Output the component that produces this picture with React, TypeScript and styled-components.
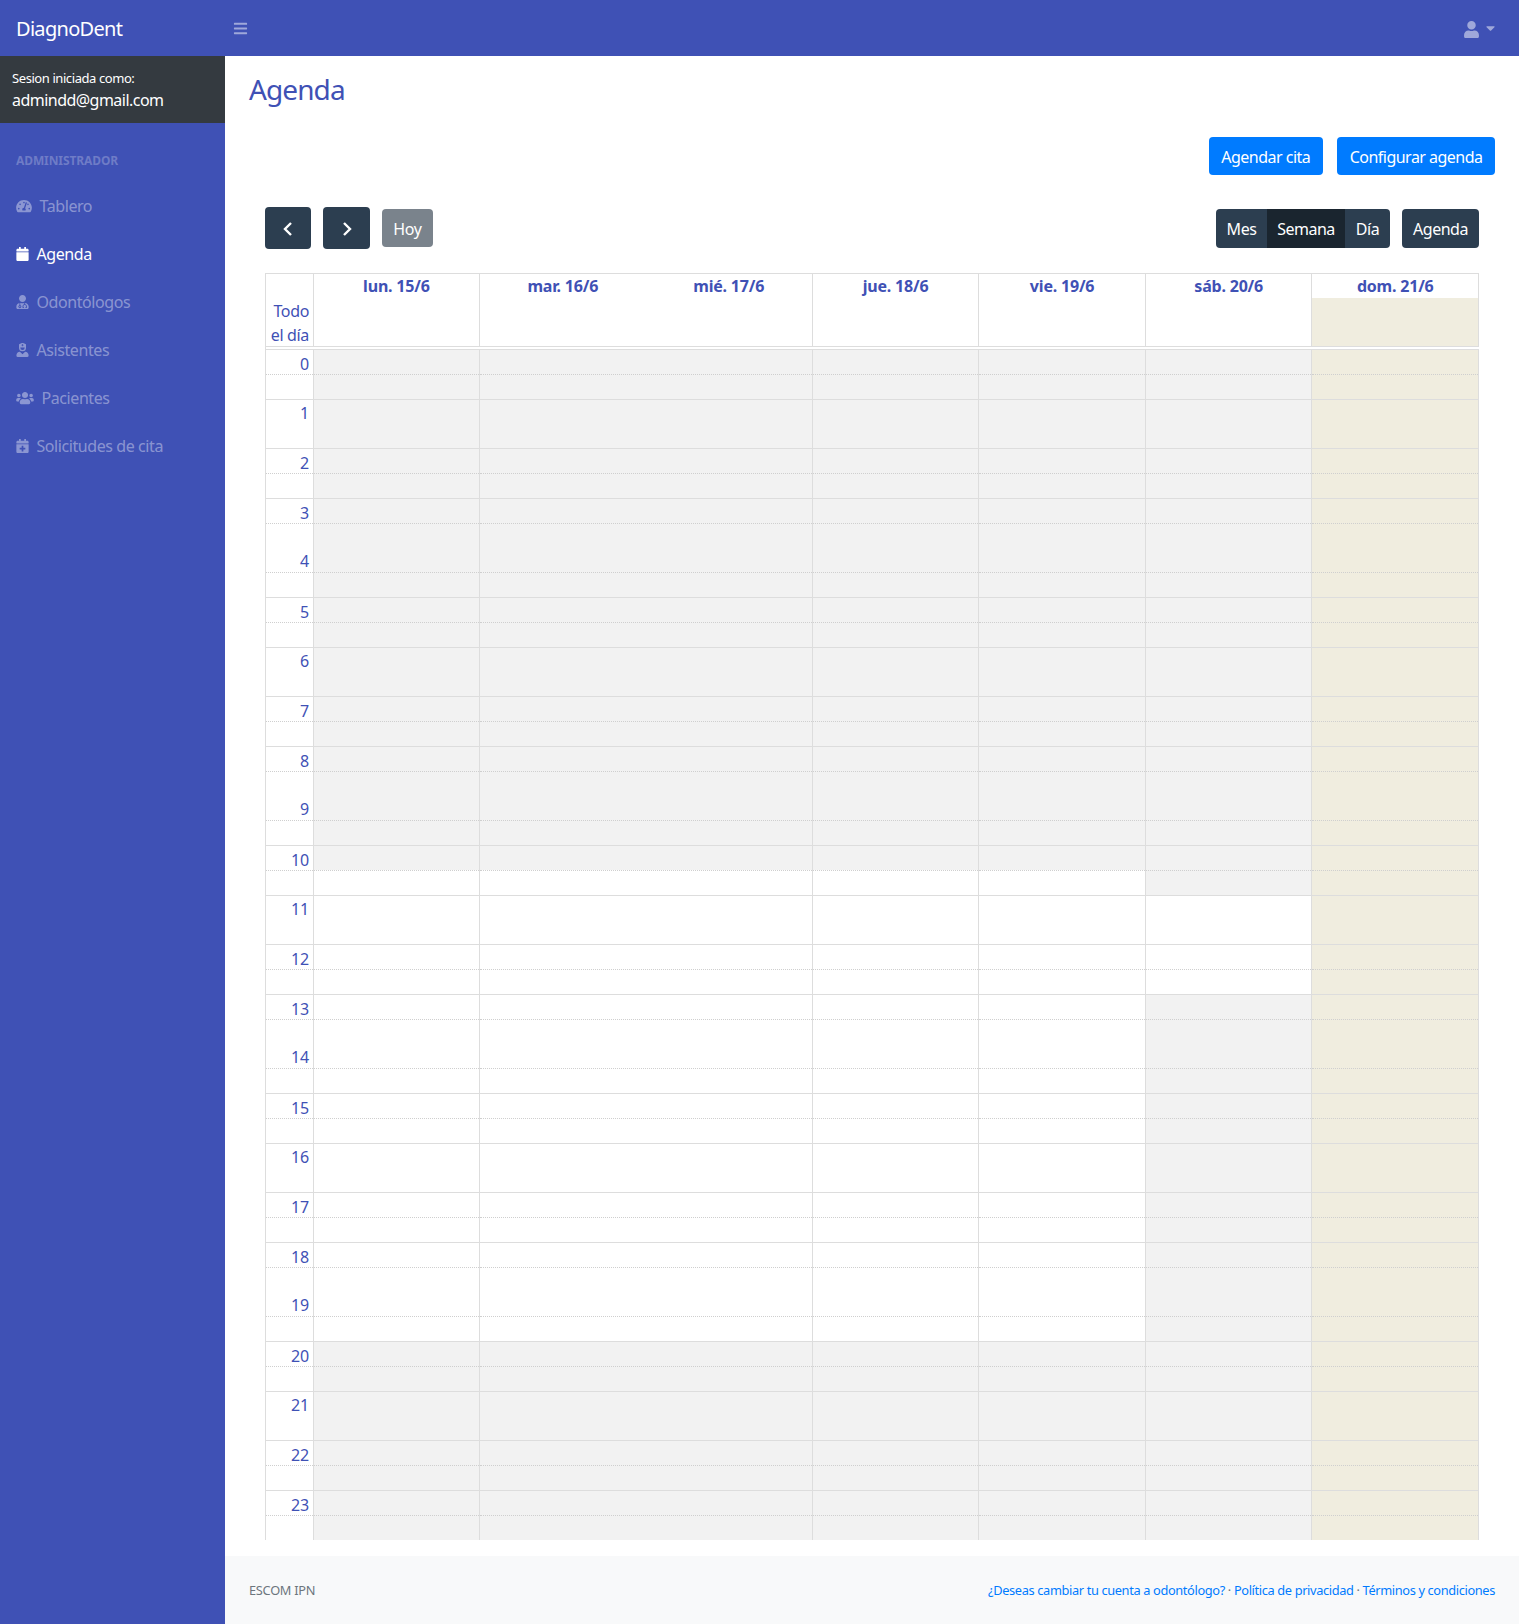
import React from "react";
import styled, { createGlobalStyle } from "styled-components";
import {
  FaBars,
  FaCalendar,
  FaCalendarPlus,
  FaCaretDown,
  FaTachometerAlt,
  FaUser,
  FaUserMd,
  FaUserNurse,
  FaUsers,
} from "react-icons/fa";

const Global = createGlobalStyle`
  html, body { margin: 0; padding: 0; background: #fff; }
  body {
    font-family: "Noto Sans", "Open Sans", "Liberation Sans", sans-serif;
    font-size: 16px;
    line-height: 24px;
    letter-spacing: -0.35px;
    color: #212529;
  }
  * { box-sizing: border-box; }
`;

const Page = styled.div`
  width: 1519px;
  height: 1624px;
  display: flex;
  flex-direction: column;
  overflow: hidden;
`;

const Topbar = styled.header`
  height: 56px;
  flex: none;
  background: #3f51b5;
  display: flex;
  align-items: center;
`;

const Brand = styled.div`
  width: 225px;
  padding: 2px 0 0 16px;
  font-size: 20px;
  color: #fff;
  letter-spacing: -0.7px;
`;

const MenuToggle = styled.div`
  margin: 1px 0 0 8px;
  display: flex;
  color: #9fa8da;
  font-size: 15px;
`;

const UserMenu = styled.div`
  margin-left: auto;
  margin-right: 24px;
  display: flex;
  align-items: center;
  gap: 6px;
  color: #9fa8da;
  font-size: 17px;
`;

const UserIcon = styled(FaUser)`
  margin-top: 2px;
`;

const Caret = styled(FaCaretDown)`
  width: 9px;
  height: 14px;
`;

const Body = styled.div`
  flex: 1;
  display: flex;
  min-height: 0;
`;

const Sidebar = styled.aside`
  width: 225px;
  flex: none;
  background: #3f51b5;
`;

const SessionBox = styled.div`
  height: 67px;
  background: #343a40;
  padding: 11px 12px 0;
  color: #fff;
`;

const SessionLabel = styled.div`
  font-size: 13px;
  line-height: 22px;
  letter-spacing: -0.42px;
`;

const SessionMail = styled.div`
  margin-top: -1px;
  font-size: 16px;
  line-height: 24px;
  letter-spacing: -0.53px;
`;

const SectionHeading = styled.div`
  margin-top: 28px;
  padding-left: 16px;
  height: 20px;
  font-size: 12px;
  line-height: 20px;
  font-weight: 700;
  letter-spacing: -0.1px;
  color: rgba(255, 255, 255, 0.25);
`;

const Nav = styled.nav`
  margin-top: 11px;
  display: flex;
  flex-direction: column;
`;

const NavItem = styled.a<{ $active?: boolean }>`
  height: 48px;
  padding-left: 16px;
  display: flex;
  align-items: center;
  gap: 7.5px;
  color: ${(p) => (p.$active ? "#fff" : "rgba(255, 255, 255, 0.4)")};
  font-size: 16px;
  letter-spacing: -0.42px;
`;

const NavGlyph = styled.span<{ $w: number }>`
  display: flex;
  svg {
    width: ${(p) => p.$w}px;
    height: 14px;
  }
`;

const Content = styled.div`
  flex: 1;
  min-width: 0;
  display: flex;
  flex-direction: column;
`;

const Main = styled.main`
  padding: 16px 24px 0;
`;

const Title = styled.h1`
  margin: 0;
  font-size: 28px;
  line-height: 34px;
  font-weight: 400;
  letter-spacing: -0.9px;
  color: #3f51b5;
`;

const Actions = styled.div`
  margin-top: 31px;
  display: flex;
  justify-content: flex-end;
  gap: 14.5px;
`;

const PrimaryButton = styled.a`
  height: 38px;
  padding: 2px 12.5px 0;
  display: flex;
  align-items: center;
  background: #007bff;
  color: #fff;
  border-radius: 4px;
  letter-spacing: -0.52px;
`;

const CalendarWrap = styled.section`
  padding: 0 16px;
`;

const Toolbar = styled.div`
  margin-top: 32px;
  height: 42px;
  display: flex;
  align-items: center;
  justify-content: space-between;
`;

const ToolGroup = styled.div`
  display: flex;
  align-items: center;
  gap: 12px;
`;

const ArrowButton = styled.a<{ $w: number }>`
  width: ${(p) => p.$w}px;
  height: 42px;
  padding-top: 2px;
  display: flex;
  align-items: center;
  justify-content: center;
  background: #2c3e50;
  border-radius: 4px;
`;

const TodayButton = styled.a`
  width: 51px;
  height: 38px;
  padding-top: 2px;
  display: flex;
  align-items: center;
  justify-content: center;
  background: #7a838c;
  color: #fff;
  border-radius: 4px;
`;

const ViewGroup = styled.div`
  display: flex;
  border-radius: 4px;
  overflow: hidden;
`;

const ViewButton = styled.a<{ $active?: boolean; $w: number }>`
  width: ${(p) => p.$w}px;
  height: 39px;
  padding-top: 2px;
  display: flex;
  align-items: center;
  justify-content: center;
  background: ${(p) => (p.$active ? "#1a252f" : "#2c3e50")};
  color: #fff;
  letter-spacing: -0.48px;
`;

const ViewSingle = styled(ViewButton)`
  border-radius: 4px;
`;

const Calendar = styled.div`
  margin-top: 24px;
  border-left: 1px solid #ddd;
  color: #3f51b5;
`;

const HeaderRow = styled.div`
  height: 74px;
  display: flex;
  border-top: 1px solid #ddd;
  border-bottom: 1px solid #ddd;
`;

const AllDayLabel = styled.div`
  width: 48px;
  flex: none;
  padding: 25px 4px 0 0;
  border-right: 1px solid #ddd;
  text-align: right;
`;

const DayHead = styled.div<{ $span: number }>`
  flex: ${(p) => p.$span} 1 0;
  min-width: 0;
  border-right: 1px solid #ddd;
  display: flex;
`;

const DayHeadCell = styled.div`
  flex: 1 1 0;
  display: flex;
  flex-direction: column;
  min-width: 0;
`;

const DayName = styled.div`
  height: 24px;
  flex: none;
  text-align: center;
  font-weight: 700;
  letter-spacing: -0.2px;
  background: #fff;
`;

const AllDayArea = styled.div<{ $today?: boolean }>`
  flex: 1;
  background: ${(p) => (p.$today ? "#f0eddf" : "#fff")};
`;

const TimeGrid = styled.div`
  margin-top: 2px;
  display: flex;
`;

const GutterColumn = styled.div`
  width: 48px;
  flex: none;
  border-right: 1px solid #ddd;
`;

const DayColumn = styled.div<{ $span: number }>`
  flex: ${(p) => p.$span} 1 0;
  min-width: 0;
  border-right: 1px solid #ddd;
`;

type Line = "solid" | "dotted" | "none";

const Slot = styled.div<{ $h: number; $line: Line; $tone?: string }>`
  height: ${(p) => p.$h}px;
  background: ${(p) => p.$tone ?? "transparent"};
  border-top: ${(p) =>
    p.$line === "none" ? "0" : p.$line === "solid" ? "1px solid #ddd" : "1px dotted #cfcfcf"};
`;

const HourLabel = styled.div<{ $top: number }>`
  padding: ${(p) => p.$top}px 4px 0 0;
  text-align: right;
  white-space: nowrap;
  letter-spacing: -0.2px;
`;

const Footer = styled.footer`
  margin-top: auto;
  height: 68px;
  flex: none;
  padding: 0 24px;
  background: #f8f9fa;
  display: flex;
  align-items: center;
  justify-content: space-between;
  font-size: 12.8px;
  letter-spacing: -0.28px;
  color: #6c757d;
`;

const FooterLinks = styled.span`
  letter-spacing: -0.36px;
`;

const FooterLink = styled.a`
  color: #007bff;
`;

const Chevron = styled.svg`
  display: block;
`;

const PERIOD_HEIGHTS = [25, 25, 24, 25, 25, 25, 25, 24, 25, 25];
const PERIOD_LINES: Line[] = [
  "solid",
  "dotted",
  "solid",
  "none",
  "solid",
  "dotted",
  "solid",
  "dotted",
  "none",
  "dotted",
];

const GRAY = "#f2f2f2";
const BEIGE = "#f0eddf";

const SLOTS = Array.from({ length: 48 }, (_, i) => ({
  i,
  h: PERIOD_HEIGHTS[i % 10] + (i === 47 ? 1 : 0),
  line: PERIOD_LINES[i % 10],
  labelTop: i % 10 === 2 ? 1 : 2,
}));

const weekdayTone = (i: number) => (i <= 20 || i >= 40 ? GRAY : undefined);
const saturdayTone = (i: number) => (i <= 21 || i >= 26 ? GRAY : undefined);
const sundayTone = () => BEIGE;

const DAYS = [
  { labels: ["lun. 15/6"], span: 0.995, tone: weekdayTone },
  { labels: ["mar. 16/6", "mié. 17/6"], span: 2.005, tone: weekdayTone },
  { labels: ["jue. 18/6"], span: 1, tone: weekdayTone },
  { labels: ["vie. 19/6"], span: 1, tone: weekdayTone },
  { labels: ["sáb. 20/6"], span: 1, tone: saturdayTone },
  { labels: ["dom. 21/6"], span: 1, tone: sundayTone, today: true },
];

const NAV = [
  { label: "Tablero", Icon: FaTachometerAlt, w: 16 },
  { label: "Agenda", Icon: FaCalendar, w: 13, active: true },
  { label: "Odontólogos", Icon: FaUserMd, w: 13 },
  { label: "Asistentes", Icon: FaUserNurse, w: 13 },
  { label: "Pacientes", Icon: FaUsers, w: 18 },
  { label: "Solicitudes de cita", Icon: FaCalendarPlus, w: 13 },
];

export default function App() {
  return (
    <Page>
      <Global />
      <Topbar>
        <Brand>DiagnoDent</Brand>
        <MenuToggle>
          <FaBars />
        </MenuToggle>
        <UserMenu>
          <UserIcon />
          <Caret />
        </UserMenu>
      </Topbar>
      <Body>
        <Sidebar>
          <SessionBox>
            <SessionLabel>Sesion iniciada como:</SessionLabel>
            <SessionMail>admindd@gmail.com</SessionMail>
          </SessionBox>
          <SectionHeading>ADMINISTRADOR</SectionHeading>
          <Nav>
            {NAV.map(({ label, Icon, active, w }) => (
              <NavItem key={label} $active={active}>
                <NavGlyph $w={w}>
                  <Icon />
                </NavGlyph>
                {label}
              </NavItem>
            ))}
          </Nav>
        </Sidebar>
        <Content>
          <Main>
            <Title>Agenda</Title>
            <Actions>
              <PrimaryButton>Agendar cita</PrimaryButton>
              <PrimaryButton>Configurar agenda</PrimaryButton>
            </Actions>
            <CalendarWrap>
              <Toolbar>
                <ToolGroup>
                  <ArrowButton $w={46}>
                    <Chevron width="10" height="16" viewBox="0 0 10 16">
                      <path d="M8 2 2 8l6 6" fill="none" stroke="#fff" strokeWidth="2.4" />
                    </Chevron>
                  </ArrowButton>
                  <ArrowButton $w={47}>
                    <Chevron width="10" height="16" viewBox="0 0 10 16">
                      <path d="M2 2l6 6-6 6" fill="none" stroke="#fff" strokeWidth="2.4" />
                    </Chevron>
                  </ArrowButton>
                  <TodayButton>Hoy</TodayButton>
                </ToolGroup>
                <ToolGroup>
                  <ViewGroup>
                    <ViewButton $w={51}>Mes</ViewButton>
                    <ViewButton $w={78} $active>
                      Semana
                    </ViewButton>
                    <ViewButton $w={45}>Día</ViewButton>
                  </ViewGroup>
                  <ViewSingle $w={77}>Agenda</ViewSingle>
                </ToolGroup>
              </Toolbar>
              <Calendar>
                <HeaderRow>
                  <AllDayLabel>
                    Todo
                    <br />
                    el día
                  </AllDayLabel>
                  {DAYS.map((d) => (
                    <DayHead key={d.labels[0]} $span={d.span}>
                      {d.labels.map((l) => (
                        <DayHeadCell key={l}>
                          <DayName>{l}</DayName>
                          <AllDayArea $today={d.today} />
                        </DayHeadCell>
                      ))}
                    </DayHead>
                  ))}
                </HeaderRow>
                <TimeGrid>
                  <GutterColumn>
                    {SLOTS.map((s) => (
                      <Slot key={s.i} $h={s.h} $line={s.line}>
                        {s.i % 2 === 0 && <HourLabel $top={s.labelTop}>{s.i / 2}</HourLabel>}
                      </Slot>
                    ))}
                  </GutterColumn>
                  {DAYS.map((d) => (
                    <DayColumn key={d.labels[0]} $span={d.span}>
                      {SLOTS.map((s) => (
                        <Slot key={s.i} $h={s.h} $line={s.line} $tone={d.tone(s.i)} />
                      ))}
                    </DayColumn>
                  ))}
                </TimeGrid>
              </Calendar>
            </CalendarWrap>
          </Main>
          <Footer>
            <span>ESCOM IPN</span>
            <FooterLinks>
              <FooterLink>¿Deseas cambiar tu cuenta a odontólogo?</FooterLink>
              {" · "}
              <FooterLink>Política de privacidad</FooterLink>
              {" · "}
              <FooterLink>Términos y condiciones</FooterLink>
            </FooterLinks>
          </Footer>
        </Content>
      </Body>
    </Page>
  );
}
